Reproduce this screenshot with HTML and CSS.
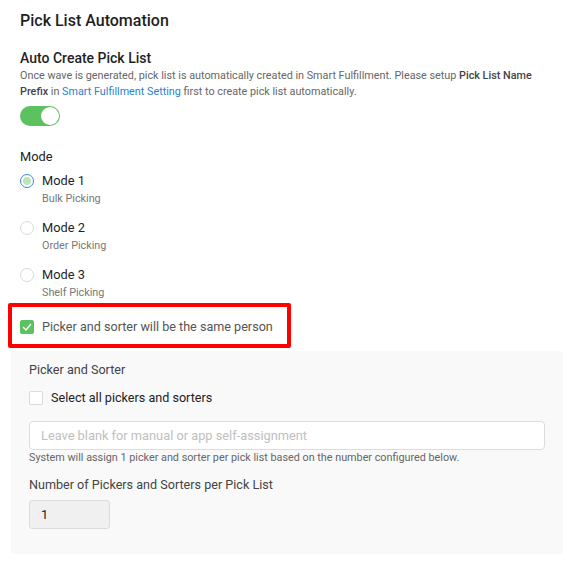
FILE: index.html
```html
<!DOCTYPE html>
<html>
<head>
<meta charset="utf-8">
<link rel="stylesheet" href="styles.css">
</head>
<body>
<div class="page">
  <h1 class="title">Pick List Automation</h1>
  <h2 class="subtitle">Auto Create Pick List</h2>
  <p class="desc">Once wave is generated, pick list is automatically created in Smart Fulfillment. Please setup <b>Pick List Name Prefix</b> in <a class="link">Smart Fulfillment Setting</a> first to create pick list automatically.</p>
  <div class="toggle"><span class="knob"></span></div>

  <div class="mode-label">Mode</div>
  <div class="radios">
    <div class="radio-item">
      <span class="radio checked"><span class="dot"></span></span>
      <div class="radio-text"><div class="rt-main">Mode 1</div><div class="rt-sub">Bulk Picking</div></div>
    </div>
    <div class="radio-item">
      <span class="radio"></span>
      <div class="radio-text"><div class="rt-main">Mode 2</div><div class="rt-sub">Order Picking</div></div>
    </div>
    <div class="radio-item">
      <span class="radio"></span>
      <div class="radio-text"><div class="rt-main">Mode 3</div><div class="rt-sub">Shelf Picking</div></div>
    </div>
  </div>

  <div class="highlight">
    <span class="cb checked"><svg width="10" height="8" viewBox="0 0 10 8"><path d="M1 4 L4 7 L9 1" fill="none" stroke="#fff" stroke-width="1.4"/></svg></span>
    <span class="cb-label gray">Picker and sorter will be the same person</span>
  </div>

  <div class="panel">
    <div class="panel-title">Picker and Sorter</div>
    <div class="cb-row">
      <span class="cb"></span>
      <span class="cb-label">Select all pickers and sorters</span>
    </div>
    <div class="input">Leave blank for manual or app self-assignment</div>
    <div class="help">System will assign 1 picker and sorter per pick list based on the number configured below.</div>
    <div class="num-label">Number of Pickers and Sorters per Pick List</div>
    <div class="num">1</div>
  </div>
</div>
</body>
</html>
```
FILE: styles.css
```css
* { box-sizing: border-box; }
html, body { margin: 0; padding: 0; background: #fff; }
body { font-family: Roboto, "Noto Sans", sans-serif; color: #222; }
.page { padding: 11px 11px 0 11px; width: 574px; }
.title { margin: 0 0 0 9px; font-size: 16px; font-weight: 500; line-height: 20px; color: #1f1f1f; }
.subtitle { margin: 18px 0 0 9px; font-size: 14px; font-weight: 500; line-height: 18px; color: #1f1f1f; }
.desc { margin: 1px 0 0 9px; font-size: 10.8px; line-height: 16px; color: #666; width: 530px; }
.desc b, .desc a { line-height: 16px; }
.desc b { font-weight: 500; color: #444; }
.link { color: #2a7fd4; }
.toggle { margin: 6px 0 0 9px; width: 40px; height: 20px; border-radius: 10px; background: #5cc15f; position: relative; }
.knob { position: absolute; right: 1px; top: 1px; width: 18px; height: 18px; border-radius: 50%; background: #fff; }
.mode-label { margin: 22px 0 0 9px; font-size: 12.8px; line-height: 18px; color: #222; }
.radios { margin: 7px 0 0 9px; display: flex; flex-direction: column; gap: 14px; }
.radio-item { display: flex; gap: 8px; align-items: flex-start; }
.radio { width: 14px; height: 14px; border-radius: 50%; border: 1px solid #d9d9d9; margin-top: 1px; display: flex; align-items: center; justify-content: center; background: #fff; flex: none; }
.radio.checked { border-color: #3b86e0; }
.dot { width: 8px; height: 8px; border-radius: 50%; background: #b8e6b8; }
.rt-main { font-size: 12.8px; line-height: 16px; color: #1f1f1f; }
.rt-sub { margin-top: 3px; font-size: 10.8px; line-height: 14px; color: #777; }
.highlight { margin: 3px 0 0 -3px; width: 283px; height: 45px; border: 4px solid #f00; border-radius: 2px; display: flex; align-items: center; gap: 8px; padding-left: 8px; padding-top: 2px; }
.cb { width: 14px; height: 14px; border: 1px solid #d9d9d9; border-radius: 2px; background: #fff; flex: none; display: flex; align-items: center; justify-content: center; }
.cb.checked { background: #5cc15f; border-color: #5cc15f; }
.cb-label { font-size: 12.6px; line-height: 16px; color: #222; }
.cb-label.gray { color: #555; }
.panel { margin-top: 3px; width: 552px; height: 203px; background: #f9f9f9; border-radius: 3px; padding: 11px 18px 0 18px; }
.panel-title { font-size: 12.6px; line-height: 16px; color: #444; }
.cb-row { margin-top: 12px; display: flex; align-items: center; gap: 8px; }
.input { margin-top: 15px; height: 29px; width: 516px; background: #fff; border: 1px solid #dcdcdc; border-radius: 4px; padding-left: 11px; font-size: 12.8px; line-height: 27px; color: #c0c0c0; }
.help { margin-top: 1px; font-size: 10.8px; line-height: 14px; color: #666; }
.num-label { margin-top: 12px; font-size: 12.6px; line-height: 16px; color: #444; }
.num { margin-top: 7px; width: 81px; height: 29px; background: #f0f0f0; border: 1px solid #dcdcdc; border-radius: 3px; padding-left: 11px; font-size: 12.8px; line-height: 27px; color: #222; }
```
